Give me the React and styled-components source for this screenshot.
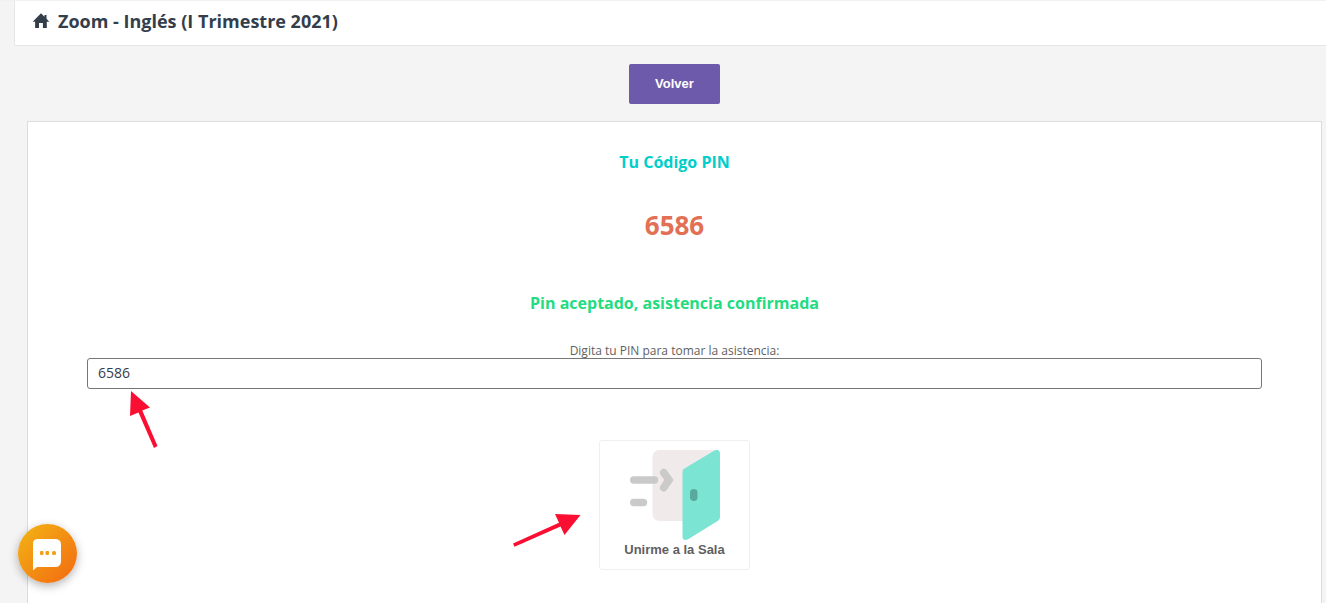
import React, { useState } from 'react'
import styled, { createGlobalStyle } from 'styled-components'

const GlobalStyle = createGlobalStyle`
  * {
    box-sizing: border-box;
  }

  body {
    margin: 0;
    background: #f4f4f4;
    color: #5f5f5f;
    font-family: "Open Sans", "Noto Sans", sans-serif;
    font-size: 12px;
  }
`

const Page = styled.div`
  display: flex;
  flex-direction: column;
  min-height: 100vh;
  border-top: 1px solid #f1f1f1;
`

const Header = styled.header`
  display: flex;
  align-items: center;
  gap: 8px;
  height: 45px;
  margin-left: 14px;
  padding: 0 0 4px 17px;
  background: #fff;
  border-left: 1px solid #e6e6e6;
  border-bottom: 1px solid #e6e6e6;
  border-bottom-left-radius: 2px;
  color: #343e4b;
`

const PageTitle = styled.h1`
  margin: 0;
  font-size: 18px;
  line-height: 24px;
  font-weight: 700;
`

const Toolbar = styled.div`
  display: flex;
  justify-content: center;
  margin: 0 4px 0 27px;
  padding: 18px 0 17px;
`

const BackButton = styled.button`
  height: 40px;
  padding: 0 26px 2px;
  border: 0;
  border-radius: 2px;
  background: #6e5aab;
  color: #fff;
  font-family: "Liberation Sans", Arial, sans-serif;
  font-size: 13px;
  font-weight: 700;
  cursor: pointer;
`

const Card = styled.main`
  display: flex;
  flex: 1;
  flex-direction: column;
  align-items: center;
  margin: 0 4px 0 27px;
  padding: 28px 59px 33px;
  background: #fff;
  border: 1px solid #dcdcdc;
  border-bottom: 0;
  text-align: center;
`

const Heading = styled.h2`
  margin: 0;
  color: ${props => props.$color};
  font-size: 16px;
  line-height: 24px;
  font-weight: 700;
`

const Pin = styled.p`
  margin: 33px 0 48px;
  color: #e17055;
  font-size: 26px;
  line-height: 36px;
  font-weight: 700;
`

const Field = styled.div`
  position: relative;
  display: flex;
  flex-direction: column;
  width: 100%;
  margin: 27px 0 51px;
`

const Label = styled.label`
  height: 16px;
  line-height: 18px;
`

const Input = styled.input`
  width: 100%;
  height: 31px;
  padding: 0 10px 2px;
  border: 1px solid #767676;
  border-radius: 3px;
  background: #fff;
  color: #343e4b;
  font-family: "Open Sans", sans-serif;
  font-size: 14px;
`

const Join = styled.div`
  position: relative;
`

const JoinButton = styled.button`
  display: flex;
  flex-direction: column;
  align-items: center;
  width: 151px;
  height: 130px;
  padding: 9px 0 0;
  border: 1px solid #efefef;
  border-radius: 3px;
  background: #fff;
  color: #5f5f5f;
  font-family: "Liberation Sans", Arial, sans-serif;
  font-size: 13px;
  line-height: 20px;
  font-weight: 700;
  cursor: pointer;
`

const FieldArrow = styled.svg`
  position: absolute;
  top: 48px;
  left: 40px;
`

const JoinArrow = styled.svg`
  position: absolute;
  top: 70px;
  right: 168px;
`

const ChatButton = styled.button`
  position: fixed;
  left: 18px;
  bottom: 20px;
  display: flex;
  align-items: center;
  justify-content: center;
  width: 59px;
  height: 59px;
  padding: 0;
  border: 0;
  border-radius: 50%;
  background: linear-gradient(135deg, #f2ae14 10%, #f37012 90%);
  box-shadow: 0 3px 10px rgba(0, 0, 0, 0.3);
  cursor: pointer;
`

const HomeIcon = () => (
  <svg width="18" height="16" viewBox="0 0 18 16" fill="currentColor" aria-hidden="true">
    <path d="M9 0.3 L12.500 3.800 V2 H14.500 V5.800 L17.300 8.700 H14.800 V15 H10.900 V10 H7 V15 H3.100 V8.700 H0.700 Z" />
  </svg>
)

const DoorIcon = () => (
  <svg width="90" height="90" viewBox="0 0 90 90" aria-hidden="true">
    <path d="M30 0 H86 V71 H30 Q22.500 71 22.500 63.500 V7.500 Q22.500 0 30 0 Z" fill="#f0eaea" />
    <g fill="none" stroke="#cacaca" strokeLinecap="round">
      <path d="M3.700 30 H24.500 M3.700 52.500 H13.500" strokeWidth="7.400" />
      <path d="M33.700 22.500 L39 30 L33.700 37.700" strokeWidth="7.600" strokeLinejoin="miter" />
    </g>
    <path d="M54 18.800 L84.500 0.500 Q90 -1.500 90 4 V67 Q90 69.500 88 70.800 L58.500 89 Q52.500 92 52.500 86 V22 Q52.500 19.800 54 18.800 Z" fill="#7be4d3" />
    <rect x="60" y="39" width="7.500" height="12" rx="3.750" fill="#5aa99d" />
  </svg>
)

const ChatIcon = () => (
  <svg width="29" height="33" viewBox="0 0 29 33" aria-hidden="true">
    <path d="M5 2 H22 Q28 2 28 7.500 V24 Q28 30 22 30 H4 L0 33.500 V6.500 Q0 2 5 2 Z" fill="#fff" />
    <g fill="#f2a017">
      <rect x="7" y="14" width="3.500" height="4" rx="1" />
      <rect x="12.500" y="14" width="3.500" height="4" rx="1" />
      <rect x="19" y="14" width="4" height="4" rx="1.500" />
    </g>
  </svg>
)

export default function App () {
  const [pin, setPin] = useState('6586')

  return (
    <>
      <GlobalStyle />
      <Page>
        <Header>
          <HomeIcon />
          <PageTitle>Zoom - Inglés (I Trimestre 2021)</PageTitle>
        </Header>
        <Toolbar>
          <BackButton type="button">Volver</BackButton>
        </Toolbar>
        <Card>
          <Heading $color="#00cec9">Tu Código PIN</Heading>
          <Pin>6586</Pin>
          <Heading $color="#22dc7f">Pin aceptado, asistencia confirmada</Heading>
          <Field>
            <Label htmlFor="pin">Digita tu PIN para tomar la asistencia:</Label>
            <Input id="pin" type="text" value={pin} onChange={e => setPin(e.target.value)} />
            <FieldArrow width="32" height="60" viewBox="0 0 32 60" fill="#fa0f32" aria-hidden="true">
              <path d="M4 1 L23 17.500 L15.300 20.500 L30.500 56 L27 58 L11.500 22.500 L3 26 Z" />
            </FieldArrow>
          </Field>
          <Join>
            <JoinButton type="button">
              <DoorIcon />
              Unirme a la Sala
            </JoinButton>
            <JoinArrow width="70" height="40" viewBox="0 0 70 40" fill="#fa0f32" aria-hidden="true">
              <path d="M68.500 5 L52.500 25 L48.500 16.500 L2.500 36.700 L1 33.500 L47 12.700 L43 4 Z" />
            </JoinArrow>
          </Join>
        </Card>
      </Page>
      <ChatButton type="button" aria-label="Chat">
        <ChatIcon />
      </ChatButton>
    </>
  )
}
